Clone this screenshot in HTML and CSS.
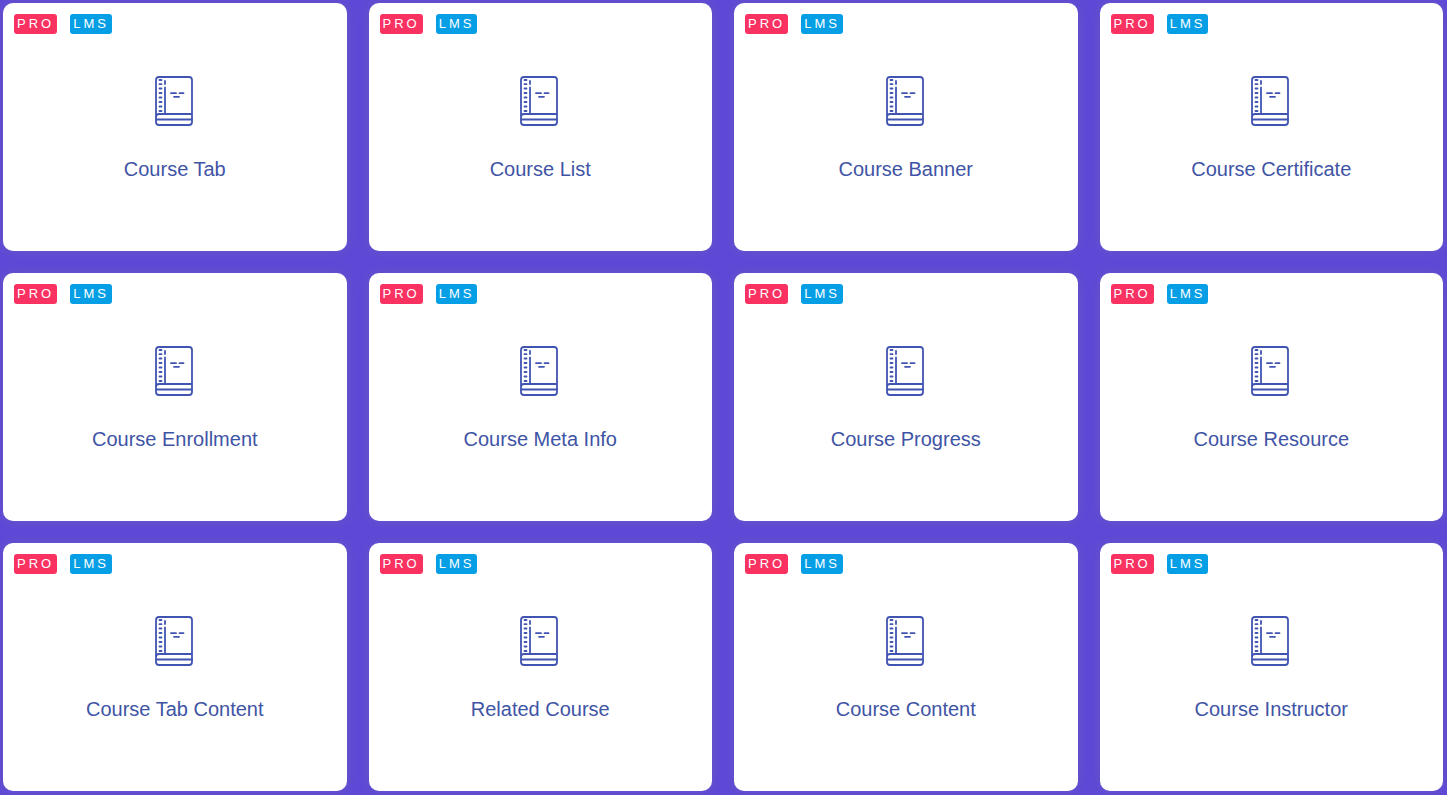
FILE: index.html
```html
<!DOCTYPE html>
<html lang="en">
<head>
<meta charset="UTF-8">
<title>Course Widgets</title>
<meta name="viewport" content="width=device-width, initial-scale=1">
<link rel="stylesheet" href="styles.css">
</head>
<body>
<svg class="sprite" aria-hidden="true">
	<symbol id="book" viewBox="0 0 40 50">
		<path d="M1 46V4q0-3 3-3h30q3 0 3 3v42q0 3-3 3H4q-3 0-3-3v-5q0-3 3-3h33"/>
		<path d="M1.500 43.500H37M10 38V11.500M10 8V5"/>
		<path d="M4.500 4h2M4.500 8.200h2M4.500 12.500h2M4.500 17h2M4.500 21.500h2M4.500 26h2M4.500 30.500h2M4.500 35h2"/>
		<path d="M16 17.200h5M24.500 17.200h4M19 20.800h5"/>
	</symbol>
</svg>
<main class="widgets">
	<article class="widget">
		<div class="badges"><span class="badge pro">PRO</span><span class="badge lms">LMS</span></div>
		<svg class="icon" aria-hidden="true"><use href="#book"/></svg>
		<h3>Course Tab</h3>
	</article>
	<article class="widget">
		<div class="badges"><span class="badge pro">PRO</span><span class="badge lms">LMS</span></div>
		<svg class="icon" aria-hidden="true"><use href="#book"/></svg>
		<h3>Course List</h3>
	</article>
	<article class="widget">
		<div class="badges"><span class="badge pro">PRO</span><span class="badge lms">LMS</span></div>
		<svg class="icon" aria-hidden="true"><use href="#book"/></svg>
		<h3>Course Banner</h3>
	</article>
	<article class="widget">
		<div class="badges"><span class="badge pro">PRO</span><span class="badge lms">LMS</span></div>
		<svg class="icon" aria-hidden="true"><use href="#book"/></svg>
		<h3>Course Certificate</h3>
	</article>
	<article class="widget">
		<div class="badges"><span class="badge pro">PRO</span><span class="badge lms">LMS</span></div>
		<svg class="icon" aria-hidden="true"><use href="#book"/></svg>
		<h3>Course Enrollment</h3>
	</article>
	<article class="widget">
		<div class="badges"><span class="badge pro">PRO</span><span class="badge lms">LMS</span></div>
		<svg class="icon" aria-hidden="true"><use href="#book"/></svg>
		<h3>Course Meta Info</h3>
	</article>
	<article class="widget">
		<div class="badges"><span class="badge pro">PRO</span><span class="badge lms">LMS</span></div>
		<svg class="icon" aria-hidden="true"><use href="#book"/></svg>
		<h3>Course Progress</h3>
	</article>
	<article class="widget">
		<div class="badges"><span class="badge pro">PRO</span><span class="badge lms">LMS</span></div>
		<svg class="icon" aria-hidden="true"><use href="#book"/></svg>
		<h3>Course Resource</h3>
	</article>
	<article class="widget">
		<div class="badges"><span class="badge pro">PRO</span><span class="badge lms">LMS</span></div>
		<svg class="icon" aria-hidden="true"><use href="#book"/></svg>
		<h3>Course Tab Content</h3>
	</article>
	<article class="widget">
		<div class="badges"><span class="badge pro">PRO</span><span class="badge lms">LMS</span></div>
		<svg class="icon" aria-hidden="true"><use href="#book"/></svg>
		<h3>Related Course</h3>
	</article>
	<article class="widget">
		<div class="badges"><span class="badge pro">PRO</span><span class="badge lms">LMS</span></div>
		<svg class="icon" aria-hidden="true"><use href="#book"/></svg>
		<h3>Course Content</h3>
	</article>
	<article class="widget">
		<div class="badges"><span class="badge pro">PRO</span><span class="badge lms">LMS</span></div>
		<svg class="icon" aria-hidden="true"><use href="#book"/></svg>
		<h3>Course Instructor</h3>
	</article>
</main>
</body>
</html>
```
FILE: styles.css
```css
*{
	box-sizing: border-box;
}
body{
	margin: 0;
	background: #5d49d6;
	font-family: "Liberation Sans", Arial, sans-serif;
}
.sprite{
	display: none;
}
.widgets{
	display: grid;
	grid-template-columns: repeat(4, 1fr);
	gap: 22px;
	padding: 3px 4px 4px 3px;
}
.widget{
	display: flex;
	flex-direction: column;
	align-items: center;
	padding: 11px 11px 70px;
	border-radius: 10px;
	background: #fff;
	box-shadow: 0 0 10px rgba(120, 110, 170, .4);
}
.badges{
	display: flex;
	gap: 13px;
	align-self: flex-start;
}
.badge{
	padding: 0 3px;
	border-radius: 3px;
	color: #fff;
	font-size: 13px;
	line-height: 20px;
	letter-spacing: 3px;
}
.pro{
	background: #f93262;
}
.lms{
	background: #069fe6;
}
.icon{
	width: 40px;
	height: 50px;
	margin: 42px 0 31px;
	fill: none;
	stroke: #4154b2;
	stroke-width: 1.8;
	stroke-linecap: round;
	stroke-linejoin: round;
}
h3{
	margin: 0;
	color: #4054a5;
	font-size: 20px;
	font-weight: 400;
	line-height: 24px;
}
```
